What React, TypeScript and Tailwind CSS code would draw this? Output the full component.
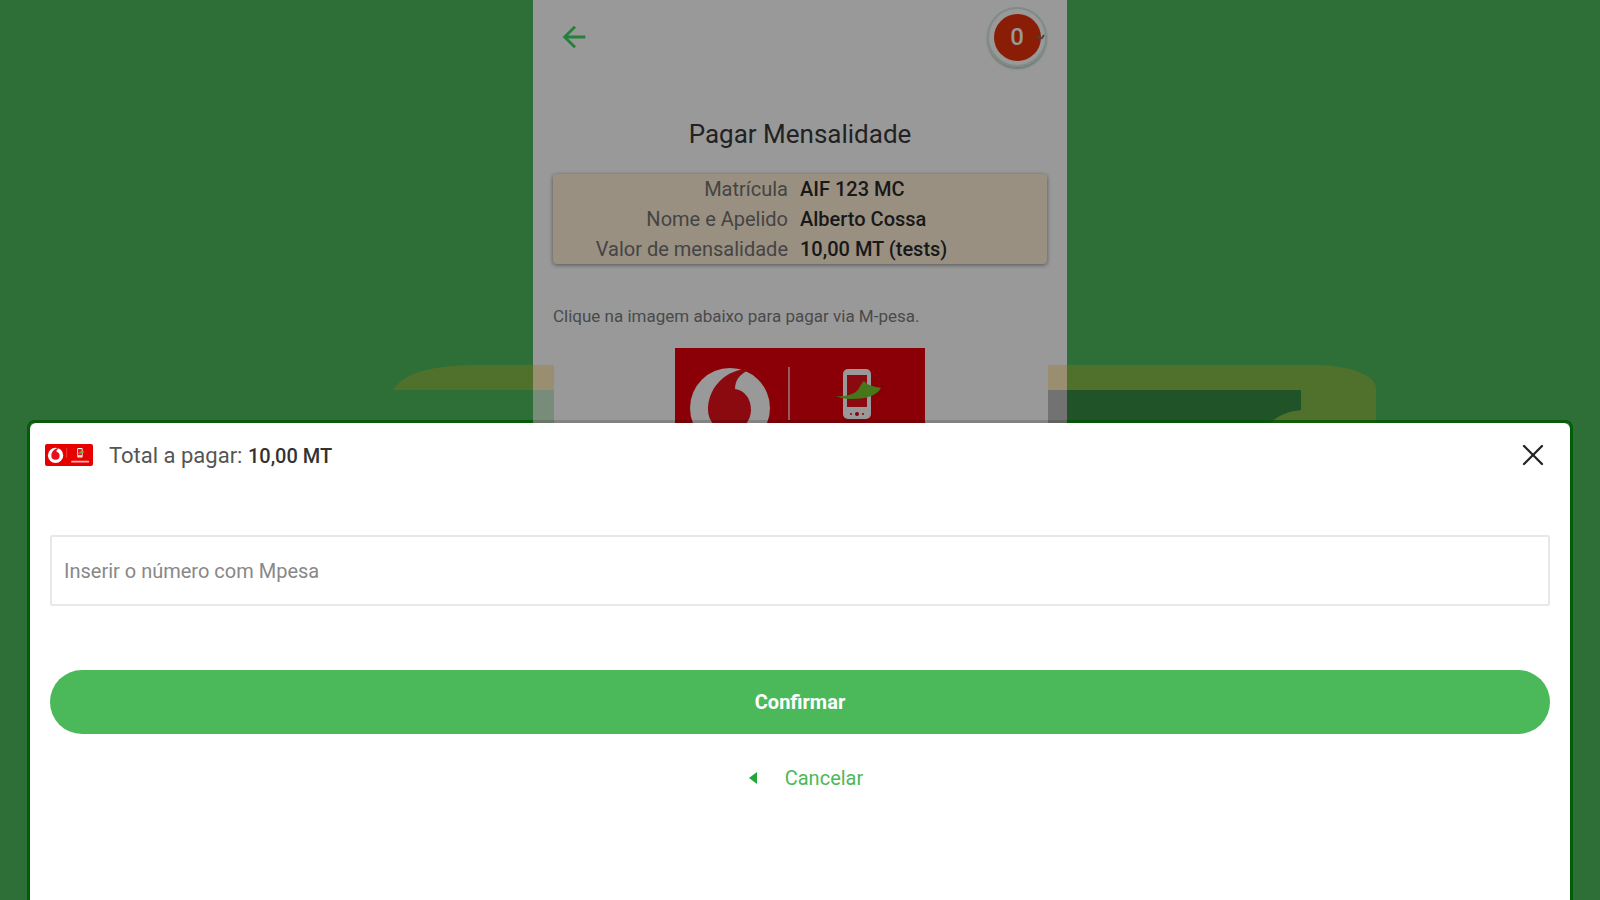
import { X } from "lucide-react";
import { MdArrowBack } from "react-icons/md";

type LogoProps = { className: string; dimmed?: boolean };

// Logo rouge du service de paiement
function MpesaLogo({ className, dimmed = false }: LogoProps) {
	const red = dimmed ? "#8a0006" : "#e60000";
	const drop = dimmed ? "#8a0a10" : "#e6101a";
	const light = dimmed ? "#999" : "#fff";
	const bird = dimmed ? "#46771a" : "#6cb52d";
	return (
		<svg viewBox="0 0 250 116" className={className} preserveAspectRatio="none" aria-hidden="true">
			<rect width="250" height="116" fill={red} />
			<circle cx="55" cy="60" r="40" fill={light} />
			<path d="M70 21C47 24 33 42 33 62a21 21 0 0 0 43 0c0-12-7-20-16-21 0-8 4-14 12-18z" fill={drop} />
			<rect x="113" y="19" width="2" height="53" fill={light} opacity="0.6" />
			<rect x="168" y="21" width="28" height="50" rx="5" fill={light} />
			<rect x="172" y="27" width="20" height="32" fill={drop} />
			<circle cx="182" cy="66" r="2" fill={red} />
			<circle cx="176" cy="66" r="1" fill={red} />
			<circle cx="188" cy="66" r="1" fill={red} />
			<path d="M161 48c8 1 14-1 18-3 6-3 6-9 10-12 3 4 8 5 17 7-4 8-16 11-30 11-6 0-11-1-15-3z" fill={bird} />
			<rect x="136" y="88" width="94" height="10" rx="5" fill={light} opacity="0.7" />
		</svg>
	);
}

// Formes décoratives semi-transparentes derrière la fenêtre
function Watermark() {
	return (
		<svg
			viewBox="0 0 984 70"
			className="absolute top-[365px] left-[calc(50%-407px)] h-[70px] w-[984px] max-w-none"
			aria-hidden="true"
		>
			<path d="M0 25C10 10 30 1 80 0H161V25Z" fill="#9e7615" fillOpacity="0.3" />
			<path
				d="M655 0H922C952 0 983 9 983 23V70H870C876 54 890 47 908 45V25H655Z"
				fill="#9e7615"
				fillOpacity="0.3"
			/>
			<rect x="140" y="25" width="21" height="45" fill="#2d6f36" fillOpacity="0.3" />
			<path d="M655 25H908V45C890 47 876 54 870 70H655Z" fill="#000" fillOpacity="0.25" />
		</svg>
	);
}

const details = [
	{ label: "Matrícula", value: "AIF 123 MC" },
	{ label: "Nome e Apelido", value: "Alberto Cossa" },
	{ label: "Valor de mensalidade", value: "10,00 MT (tests)" },
];

export default function App() {
	return (
		<div className="relative min-h-screen overflow-hidden bg-[#2d6f36] font-['Roboto',sans-serif]">
			{/* Page de paiement, assombrie sous la fenêtre */}
			<main className="mx-auto min-h-screen w-[534px] max-w-full bg-[#999] px-5">
				<header className="flex h-[74px] items-center justify-between">
					<button aria-label="Voltar" className="ml-1 text-[#24803a]">
						<MdArrowBack size={34} />
					</button>
					<button
						aria-label="Perfil"
						className="relative flex size-[60px] items-center justify-center rounded-full border-2 border-[#7f8c84] shadow-[0_2px_2px_#6f7b74]"
					>
						<span className="flex size-[47px] items-center justify-center rounded-full bg-[#8a1d05] text-2xl font-medium text-[#999]">
							0
						</span>
						<svg viewBox="0 0 8 6" className="absolute right-0 h-[6px] w-[8px]" aria-hidden="true">
							<path d="M0 2Q2 5 5 4L7 1" fill="none" stroke="#444" strokeWidth="2" />
						</svg>
					</button>
				</header>

				<h1 className="mt-11 text-center text-[26px] leading-8 text-[#222]">Pagar Mensalidade</h1>

				<dl className="mt-6 rounded bg-[#999082] text-xl leading-[30px] shadow-[0_1px_4px_#0007]">
					{details.map((item) => (
						<div key={item.label} className="grid grid-cols-2">
							<dt className="pr-3 text-right text-[#444]">{item.label}</dt>
							<dd className="font-medium text-[#181818]">{item.value}</dd>
						</div>
					))}
				</dl>

				<p className="mt-9 text-[17px] leading-8 text-[#4a4a4a]">
					Clique na imagem abaixo para pagar via M-pesa.
				</p>
				<button aria-label="Pagar via M-pesa" className="mx-auto mt-4 block">
					<MpesaLogo className="h-[116px] w-[250px]" dimmed />
				</button>
			</main>

			<Watermark />

			{/* Contour assombri autour de la fenêtre */}
			<div className="absolute inset-x-[27px] top-[47vh] bottom-0 -mt-[3px] flex items-start overflow-hidden rounded-t-lg border-x-3 border-[#005d08]">
				<div className="h-[3px] flex-1 bg-[#005500]/80" />
				<div className="h-[3px] w-[534px] bg-black/15" />
				<div className="h-[3px] flex-1 bg-[#005500]/80" />
			</div>

			{/* Fenêtre de confirmation */}
			<section
				role="dialog"
				aria-label="Total a pagar"
				className="absolute inset-x-[30px] top-[47vh] bottom-0 rounded-t-md bg-white"
			>
				<div className="flex h-16 items-center px-[15px]">
					<MpesaLogo className="h-[22px] w-12 rounded-xs" />
					<p className="ml-4 text-[22px] text-[#555]">
						Total a pagar: <span className="text-xl font-medium text-[#333]">10,00 MT</span>
					</p>
					<button aria-label="Fechar" className="ml-auto pr-1 text-[#222]">
						<X size={36} strokeWidth={1.5} />
					</button>
				</div>

				<form className="mt-12 flex flex-col px-5" onSubmit={(e) => e.preventDefault()}>
					<input
						type="tel"
						aria-label="Número com Mpesa"
						placeholder="Inserir o número com Mpesa"
						className="h-[71px] rounded-xs border-2 border-[#e8e8e8] px-3 text-xl text-[#444] outline-none placeholder:text-[#888]"
					/>
					<button type="submit" className="mt-16 h-16 rounded-full bg-[#4bb95a] text-xl font-bold text-white">
						Confirmar
					</button>
					<button type="button" className="mx-auto mt-6 flex h-10 items-center gap-7 pl-3 text-xl text-[#4bb95a]">
						<svg viewBox="0 0 8 12" className="h-3 w-2" aria-hidden="true">
							<path d="M0 6L8 0V12Z" fill="#1fa835" />
						</svg>
						Cancelar
					</button>
				</form>
			</section>
		</div>
	);
}
